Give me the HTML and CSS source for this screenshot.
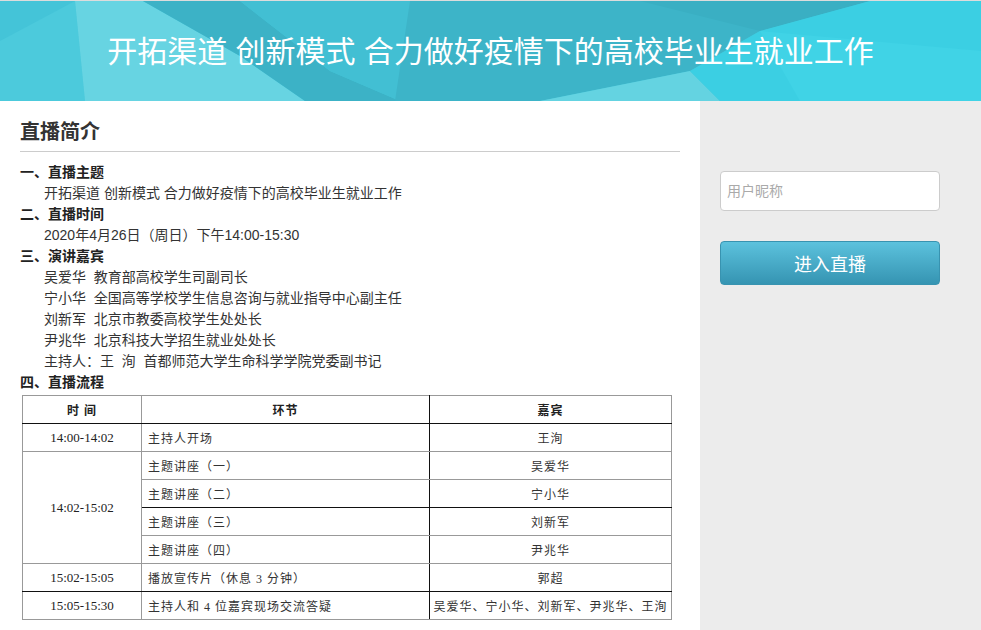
FILE: index.html
```html
<!DOCTYPE html>
<html>
  <head>
    <title>直播简介</title>
    <link rel="stylesheet" href="styles.css">
  </head>
  <body>
    <div class="banner">
      <svg class="bannerBg" viewBox="0 0 981 100" preserveAspectRatio="none">
        <rect width="981" height="100" fill="#44c4d8"/>
        <polygon points="0,40 75,0 85,100 0,100" fill="#4ccadc"/>
        <polygon points="75,0 143,0 240,55 305,100 85,100" fill="#67d4e2"/>
        <polygon points="143,0 240,0 330,70 400,100 305,100 240,55" fill="#3cb2c6"/>
        <polygon points="240,0 420,0 400,100 330,70" fill="#42bfd3"/>
        <polygon points="410,0 870,0 760,30 690,70 540,100 395,100" fill="#3db4c8"/>
        <polygon points="640,0 870,0 760,30" fill="#3aafc3"/>
        <polygon points="540,100 690,70 720,100" fill="#64d3e1"/>
        <polygon points="870,0 981,0 981,100 720,100 690,70 760,30" fill="#3bcfe3"/>
        <polygon points="760,30 981,50 981,100 800,100" fill="#40d3e6"/>
      </svg>
      <h1 class="bannerTitle">开拓渠道 创新模式 合力做好疫情下的高校毕业生就业工作</h1>
    </div>

    <div class="page">
      <div class="main">
        <h2 class="mainTitle">直播简介</h2>

        <div class="intro">
          <div class="secTitle">一、直播主题</div>
          <div class="secLine">开拓渠道 创新模式 合力做好疫情下的高校毕业生就业工作</div>
          <div class="secTitle">二、直播时间</div>
          <div class="secLine">2020年4月26日（周日）下午14:00-15:30</div>
          <div class="secTitle">三、演讲嘉宾</div>
          <div class="secLine">吴爱华&nbsp; 教育部高校学生司副司长</div>
          <div class="secLine">宁小华&nbsp; 全国高等学校学生信息咨询与就业指导中心副主任</div>
          <div class="secLine">刘新军&nbsp; 北京市教委高校学生处处长</div>
          <div class="secLine">尹兆华&nbsp; 北京科技大学招生就业处处长</div>
          <div class="secLine">主持人：王&nbsp; 洵&nbsp; 首都师范大学生命科学学院党委副书记</div>
          <div class="secTitle">四、直播流程</div>
        </div>

        <table class="flow">
          <colgroup>
            <col class="colTime">
            <col class="colSeg">
            <col>
          </colgroup>
          <tr class="head">
            <th>时 间</th>
            <th class="seg">环节</th>
            <th>嘉宾</th>
          </tr>
          <tr>
            <td class="time">14:00-14:02</td>
            <td class="seg">主持人开场</td>
            <td class="guest">王洵</td>
          </tr>
          <tr>
            <td class="time" rowspan="4">14:02-15:02</td>
            <td class="seg">主题讲座（一）</td>
            <td class="guest">吴爱华</td>
          </tr>
          <tr class="dark">
            <td class="seg">主题讲座（二）</td>
            <td class="guest">宁小华</td>
          </tr>
          <tr>
            <td class="seg">主题讲座（三）</td>
            <td class="guest">刘新军</td>
          </tr>
          <tr>
            <td class="seg">主题讲座（四）</td>
            <td class="guest">尹兆华</td>
          </tr>
          <tr class="dark">
            <td class="time">15:02-15:05</td>
            <td class="seg">播放宣传片（休息 3 分钟）</td>
            <td class="guest">郭超</td>
          </tr>
          <tr>
            <td class="time">15:05-15:30</td>
            <td class="seg">主持人和 4 位嘉宾现场交流答疑</td>
            <td class="guest">吴爱华、宁小华、刘新军、尹兆华、王洵</td>
          </tr>
        </table>
      </div>

      <div class="side">
        <input class="nickInput" placeholder="用户昵称">
        <button class="enterButton">进入直播</button>
      </div>
    </div>
  </body>
</html>
```

FILE: styles.css
```css
body {
  margin: 0;
  font-family: "Liberation Sans", "Noto Sans CJK SC", sans-serif;
  color: #333;
  background-color: #fff;
}

/* top banner */
.banner {
  position: relative;
  height: 100px;
  border-top: 1px solid #dcdcdc;
  overflow: hidden;
}

.bannerBg {
  position: absolute;
  top: 0;
  left: 0;
  width: 100%;
  height: 100%;
}

.bannerTitle {
  position: relative;
  margin: 0;
  height: 96px;
  display: flex;
  justify-content: center;
  align-items: center;
  font-size: 30px;
  font-weight: normal;
  color: #fff;
}

.page {
  display: flex;
}

.main {
  width: 660px;
  padding: 17px 20px 10px 20px;
}

.mainTitle {
  margin: 0;
  font-size: 20px;
  line-height: 28px;
  font-weight: bold;
  color: #333;
  padding-bottom: 5px;
  border-bottom: 1px solid #ccc;
}

.intro {
  margin-top: 10px;
  font-size: 14px;
  line-height: 21px;
}

.secTitle {
  font-weight: bold;
  color: #222;
}

.secLine {
  padding-left: 24px;
  color: #333;
}

/* flow table */
.flow {
  margin: 2px 0 0 2px;
  width: 650px;
  table-layout: fixed;
  border-collapse: collapse;
  border: 1px solid #999;
  font-family: "Liberation Serif", "Noto Sans CJK SC", serif;
  font-size: 12px;
  color: #333;
}

.colTime {
  width: 119px;
}

.colSeg {
  width: 288px;
}

.flow th, .flow td {
  height: 27px;
  padding: 0;
  border: 1px solid #999;
  text-align: center;
  letter-spacing: 1px;
  white-space: nowrap;
}

.flow th {
  font-weight: bold;
  color: #222;
  border-bottom: 1px solid #111;
}

.flow .seg {
  border-right: 1px solid #111;
}

.flow td.seg {
  text-align: left;
  padding-left: 6px;
}

.flow .time {
  font-size: 13px;
  letter-spacing: 0;
  color: #222;
}

.flow .dark td {
  border-bottom: 1px solid #111;
}

/* right sidebar */
.side {
  flex: 1;
  background-color: #ececec;
  padding: 70px 0 0 20px;
  display: flex;
  flex-direction: column;
  align-items: flex-start;
}

.nickInput {
  box-sizing: border-box;
  width: 220px;
  height: 40px;
  padding-left: 6px;
  border: 1px solid #ccc;
  border-radius: 4px;
  font-family: "Liberation Sans", "Noto Sans CJK SC", sans-serif;
  font-size: 14px;
  color: #333;
  outline: none;
}

.nickInput::placeholder {
  color: #aaa;
}

.enterButton {
  margin-top: 30px;
  width: 220px;
  height: 44px;
  border: 1px solid #3893b0;
  border-radius: 4px;
  background: linear-gradient(#5cc2dd, #3594b2);
  color: #fff;
  font-family: "Liberation Sans", "Noto Sans CJK SC", sans-serif;
  font-size: 18px;
  cursor: pointer;
}

.enterButton:hover {
  opacity: 0.9;
}
```
